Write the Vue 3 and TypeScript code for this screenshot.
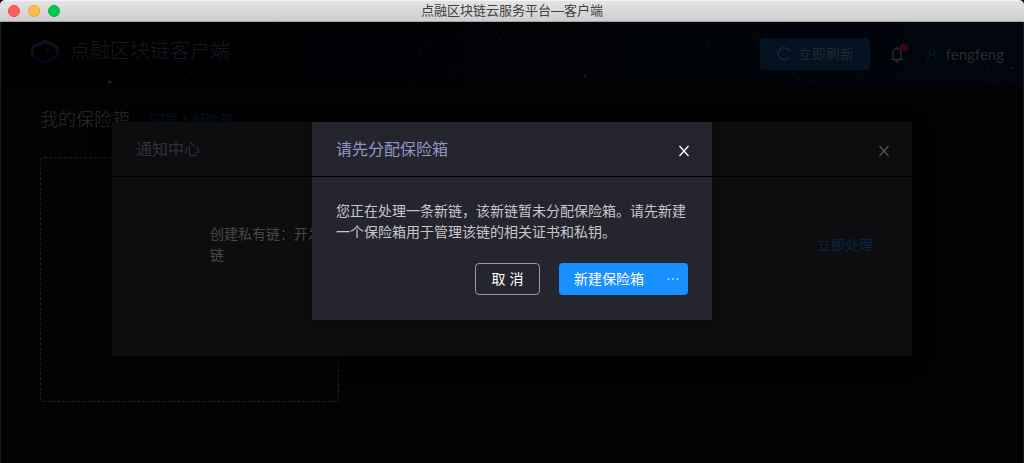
<script setup lang="ts">
interface Star {
  x: string
  y: number
  r: number
  o: number
}

const bright: [number, number, number, number][] = [
  [109, 60, 1.6, 0.17], [47, 27, 0.8, 0.12], [148, 21, 0.8, 0.12], [78, 63, 0.8, 0.1],
  [185, 57, 0.8, 0.12], [238, 57, 0.8, 0.12], [151, 55, 0.8, 0.1], [40, 47, 0.8, 0.1],
  [279, 2, 0.8, 0.12], [320, 2, 0.8, 0.1], [271, 17, 0.8, 0.1], [419, 27, 0.8, 0.14],
  [452, 46, 0.8, 0.13], [459, 44, 0.8, 0.1], [500, 17, 0.8, 0.12], [496, 12, 0.8, 0.1],
  [431, 21, 0.8, 0.1], [533, 50, 0.8, 0.12], [585, 54, 1.6, 0.12], [611, 44, 0.8, 0.12],
  [625, 14, 0.8, 0.1], [709, 22, 0.8, 0.16], [729, 21, 0.8, 0.1], [412, 62, 0.8, 0.12],
  [318, 49, 0.8, 0.1], [799, 57, 0.8, 0.16], [863, 55, 0.8, 0.1], [916, 49, 0.8, 0.1],
  [989, 47, 0.8, 0.16], [1013, 46, 1, 0.18], [1004, 31, 0.8, 0.12], [754, 11, 0.8, 0.1],
  [1007, 7, 0.8, 0.1], [993, 59, 0.8, 0.1], [811, 60, 0.8, 0.1], [648, 62, 0.8, 0.1],
]

const pct = (x: number): string => `${(x / 10.24).toFixed(2)}%`

const stars: Star[] = bright.map(([x, y, r, o]) => ({ x: pct(x), y, r, o }))
let seed = 41
const next = (): number => {
  seed = (seed * 16807) % 2147483647
  return seed / 2147483647
}
for (let i = 0; i < 150; i++) {
  stars.push({ x: pct(next() * 1024), y: Math.round(next() * 63), r: 0.7, o: 0.02 + next() * 0.05 })
}
</script>

<template>
  <div class="window">
    <div class="titlebar">
      <div class="lights">
        <button class="light red" type="button" aria-label="关闭窗口"></button>
        <button class="light yellow" type="button" aria-label="最小化"></button>
        <button class="light green" type="button" aria-label="最大化"></button>
      </div>
      <span class="window-title">点融区块链云服务平台—客户端</span>
    </div>

    <div class="page">
      <header class="topbar">
        <svg class="sky" width="100%" height="64" aria-hidden="true">
          <circle v-for="(s, i) in stars" :key="i" :cx="s.x" :cy="s.y" :r="s.r" fill="#c4ccd4" :fill-opacity="s.o" />
        </svg>
        <div class="brand">
          <svg width="30" height="28" viewBox="0 0 30 28" fill="none" aria-hidden="true">
            <path d="M2.500 11v8.500L15 25.500 27.500 19.500V11" stroke="#04041a" stroke-width="3.500" stroke-linejoin="round" />
            <path d="M2.500 17.500V10L15 4 27.500 10v7.500" stroke="#111218" stroke-width="2.500" stroke-linejoin="round" />
            <path d="M4.500 11.500 15 6.500 25.500 11.500" stroke="#05061a" stroke-width="1.500" stroke-linejoin="round" />
            <circle cx="18" cy="12" r="0.800" fill="#202227" />
          </svg>
          <h1>点融区块链客户端</h1>
        </div>
        <div class="tools">
          <button class="refresh" type="button">
            <svg width="16" height="16" viewBox="0 0 16 16" fill="none" aria-hidden="true">
              <path d="M13 4.500A6 6 0 1 0 13 11" stroke="#22292f" stroke-width="1.300" />
              <path d="M13.500 3v2h-2" stroke="#22292f" stroke-width="1" />
            </svg>
            <span>立即刷新</span>
          </button>
          <button class="bell" type="button" aria-label="通知">
            <svg width="20" height="22" viewBox="0 0 20 22" fill="none" aria-hidden="true">
              <path d="M2.500 16.500h11M4 16.500V9.500a4 4 0 0 1 8 0v7M8 5.500V4M6.500 17.500a1.500 1.500 0 0 0 3 0" stroke="#2a2d30" stroke-width="1.300" />
              <circle cx="15" cy="4.500" r="3.800" fill="#360809" stroke="#24191c" stroke-width="0.600" />
            </svg>
          </button>
          <a class="user" href="#">
            <svg width="12" height="12" viewBox="0 0 12 12" fill="none" stroke="#04192d" stroke-width="1.200" aria-hidden="true">
              <circle cx="6" cy="3.800" r="2.900" />
              <path d="M1.200 11.500C1.500 8.500 3.500 7 6 7s4.500 1.500 4.800 4.500" />
            </svg>
            <span>fengfeng</span>
          </a>
        </div>
      </header>

      <main>
        <div class="section-head">
          <h2>我的保险箱</h2>
          <a class="import" href="#">
            <svg width="14" height="14" viewBox="0 0 14 14" fill="none" stroke="#031321" stroke-width="1.200" aria-hidden="true">
              <path d="M1 1.500h12v11H1ZM4 6l3 3 3.500-3.500" />
            </svg>
            <span>导入保险箱</span>
          </a>
        </div>
        <div class="safe-slot"></div>
      </main>
    </div>

    <div class="layer">
      <section class="modal notices" aria-label="通知中心">
        <div class="modal-head">
          <h3>通知中心</h3>
          <button class="close" type="button" aria-label="关闭">
            <svg width="12" height="12" viewBox="0 0 12 12" aria-hidden="true"><path d="M1.500 1l9 10M10.500 1l-9 10" /></svg>
          </button>
        </div>
        <ul>
          <li>
            <p>创建私有链：开发链</p>
            <a href="#">立即处理</a>
          </li>
        </ul>
      </section>
    </div>

    <div class="layer">
      <section class="modal dialog" role="dialog" aria-modal="true" aria-labelledby="dialog-title">
        <div class="modal-head">
          <h3 id="dialog-title">请先分配保险箱</h3>
          <button class="close" type="button" aria-label="关闭">
            <svg width="12" height="12" viewBox="0 0 12 12" aria-hidden="true"><path d="M1.500 1l9 10M10.500 1l-9 10" /></svg>
          </button>
        </div>
        <div class="dialog-body">
          <p>您正在处理一条新链，该新链暂未分配保险箱。请先新建一个保险箱用于管理该链的相关证书和私钥。</p>
          <div class="actions">
            <button class="cancel" type="button">取 消</button>
            <button class="create" type="button">
              <span>新建保险箱</span>
              <svg width="12" height="4" viewBox="0 0 12 4" fill="#d5eaff" aria-hidden="true">
                <circle cx="1.500" cy="2" r="0.900" /><circle cx="6" cy="2" r="0.900" /><circle cx="10.500" cy="2" r="0.900" />
              </svg>
            </button>
          </div>
        </div>
      </section>
    </div>
  </div>
</template>

<style>
body {
  margin: 0;
  background: #020202;
}
</style>

<style scoped>
* {
  box-sizing: border-box;
}
.window {
  position: relative;
  display: flex;
  flex-direction: column;
  min-height: 100vh;
  font-family: "Liberation Sans", "Noto Sans CJK SC", sans-serif;
  font-size: 14px;
  line-height: 21px;
  background: #020202;
}
h1, h2, h3, p, ul {
  margin: 0;
  padding: 0;
  font-weight: 400;
}
button {
  font: inherit;
  padding: 0;
  border: 0;
  background: none;
  cursor: pointer;
}
a {
  text-decoration: none;
}
svg {
  display: block;
  flex: none;
}
.titlebar {
  display: grid;
  grid-template-columns: 1fr auto 1fr;
  align-items: center;
  height: 22px;
  padding: 0 8px;
  border-top: 1px solid #f4f4f4;
  border-bottom: 1px solid #a5a5a5;
  border-radius: 5px 5px 0 0;
  background: linear-gradient(#e4e4e4, #cecece);
}
.lights {
  display: flex;
  gap: 8px;
}
.light {
  width: 12px;
  height: 12px;
  border: 1px solid;
  border-radius: 50%;
}
.red {
  background: #ff5f5c;
  border-color: #e8504c;
}
.yellow {
  background: #ffbe4a;
  border-color: #e5a638;
}
.green {
  background: #00ca4e;
  border-color: #0cb243;
}
.window-title {
  font-size: 13px;
  line-height: 20px;
  color: #404040;
}
.page {
  flex: 1;
  border: solid #1b1b1b;
  border-width: 0 1px;
}
.topbar {
  position: relative;
  display: flex;
  align-items: center;
  justify-content: space-between;
  height: 64px;
  padding: 0 19px 0 29px;
  background: linear-gradient(90deg, #000 0%, #000104 35%, #010409 72%, #01050d 100%);
}
.sky {
  position: absolute;
  inset: 0;
}
.brand, .tools {
  position: relative;
  display: flex;
  align-items: center;
}
.brand {
  gap: 10px;
  margin-bottom: 6px;
}
h1 {
  font-size: 20px;
  line-height: 28px;
  font-weight: 300;
  color: #17181e;
}
.refresh {
  display: flex;
  align-items: center;
  justify-content: center;
  gap: 6px;
  width: 110px;
  height: 32px;
  border-radius: 4px;
  background: #031220;
  color: #22292f;
}
.bell {
  margin-left: 19px;
}
.user {
  display: flex;
  align-items: center;
  gap: 8px;
  margin-left: 17px;
  color: #2a2c2f;
  font-family: Lato, sans-serif;
  font-size: 15px;
}
main {
  padding: 20px 39px;
}
.section-head {
  display: flex;
  align-items: center;
  gap: 20px;
  height: 28px;
}
h2 {
  font-size: 18px;
  font-weight: 300;
  color: #2c2c2c;
}
.import {
  display: flex;
  align-items: center;
  color: #031321;
}
.safe-slot {
  width: 299px;
  height: 245px;
  margin-top: 23px;
  border: 1px dashed #202020;
  border-radius: 4px;
  background: #040404;
}
.layer {
  position: absolute;
  inset: 0;
  display: flex;
  align-items: flex-start;
  justify-content: center;
  padding: 122px 24px 24px;
}
.modal {
  width: 100%;
}
.modal-head {
  display: flex;
  align-items: center;
  justify-content: space-between;
  height: 55px;
  padding: 2px 22px 0 24px;
  border-bottom: 1px solid #000;
}
.modal-head h3 {
  font-size: 16px;
  line-height: 24px;
}
.close {
  margin-top: 2px;
}
.close path {
  fill: none;
  stroke: currentColor;
  stroke-width: 1.3;
}
.notices {
  max-width: 800px;
  background: #0d0d0f;
  box-shadow: 0 4px 12px #000;
}
.notices h3 {
  color: #2f303e;
}
.notices .close {
  color: #535354;
}
.notices ul {
  list-style: none;
  padding: 27px 24px 69px 54px;
}
.notices li {
  display: flex;
  align-items: center;
  justify-content: space-between;
  padding: 20px 15px 20px 44px;
  border-bottom: 1px solid #0a0a0b;
}
.notices p {
  width: 112px;
  color: #474748;
}
.notices a {
  color: #072645;
}
.dialog {
  max-width: 400px;
  background: #25252f;
  box-shadow: 0 4px 12px rgba(0, 0, 0, 0.3);
}
.dialog h3 {
  color: #9095c5;
}
.dialog .close {
  color: #fff;
}
.dialog-body {
  padding: 24px 24px 25px;
  color: #c7c7c9;
}
.actions {
  display: flex;
  justify-content: flex-end;
  gap: 19px;
  margin-top: 20px;
}
.actions button {
  height: 32px;
  border-radius: 4px;
  color: #fff;
}
.cancel {
  width: 65px;
  border: 1px solid #99999d;
}
.create {
  display: flex;
  align-items: center;
  justify-content: space-between;
  width: 129px;
  padding: 0 9px 0 15px;
  background: #1890ff;
}
</style>
